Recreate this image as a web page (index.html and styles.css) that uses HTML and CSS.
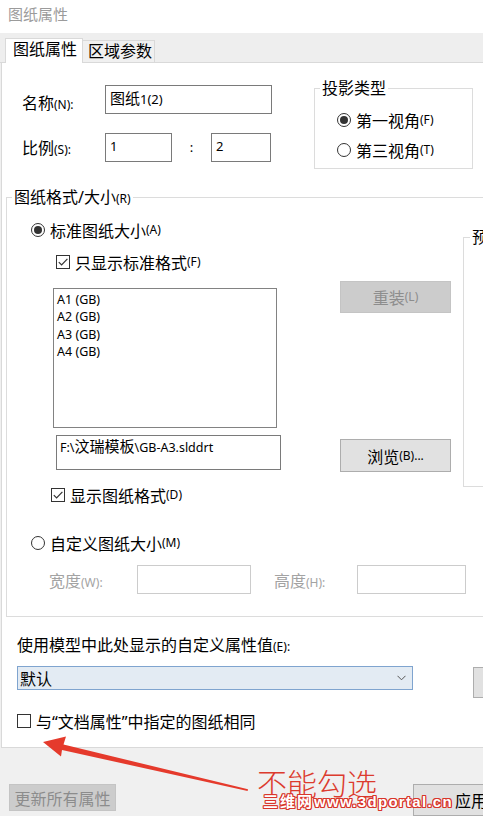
FILE: index.html
```html
<!DOCTYPE html>
<html lang="zh-CN">
<head>
<meta charset="utf-8">
<title>图纸属性</title>
<link rel="stylesheet" href="styles.css">
</head>
<body>
<div class="title">图纸属性</div>
<div class="tabs">
  <div class="tab active">图纸属性</div>
  <div class="tab">区域参数</div>
</div>
<div class="panel">
  <div class="top">
    <div class="fields">
      <div class="frow">
        <span class="lbl l-name">名称<span class="k">(N):</span></span>
        <div class="box name">图纸<span class="lat">1(2)</span></div>
      </div>
      <div class="frow">
        <span class="lbl l-scale">比例<span class="k">(S):</span></span>
        <div class="box sc">1</div>
        <span class="colon">:</span>
        <div class="box sc2">2</div>
      </div>
    </div>
    <fieldset class="proj">
      <legend>投影类型</legend>
      <div class="opt o1"><span class="radio on"></span>第一视角<span class="k">(F)</span></div>
      <div class="opt o2"><span class="radio"></span>第三视角<span class="k">(T)</span></div>
    </fieldset>
  </div>
  <fieldset class="fmt">
    <legend>图纸格式/大小<span class="k">(R)</span></legend>
    <div class="fmt-top">
      <div class="fmt-left">
        <div class="row r1"><span class="radio on"></span>标准图纸大小<span class="k">(A)</span></div>
        <div class="row r2"><span class="check"><svg viewBox="0 0 12 12" width="12" height="12"><path d="M1.8 6.2 L4.6 9 L10.4 2.8" fill="none" stroke="#333" stroke-width="1.2"/></svg></span>只显示标准格式<span class="k">(F)</span></div>
        <div class="r3">
          <div class="list">
            <div>A1 (GB)</div>
            <div>A2 (GB)</div>
            <div>A3 (GB)</div>
            <div>A4 (GB)</div>
          </div>
          <div class="btn reload">重装<span class="k">(L)</span></div>
        </div>
        <div class="r4">
          <div class="path">F:\<span class="cj">汶瑞模板</span>\GB-A3.slddrt</div>
          <div class="btn browse">浏览<span class="k">(B)...</span></div>
        </div>
        <div class="row r5"><span class="check"><svg viewBox="0 0 12 12" width="12" height="12"><path d="M1.8 6.2 L4.6 9 L10.4 2.8" fill="none" stroke="#333" stroke-width="1.2"/></svg></span>显示图纸格式<span class="k">(D)</span></div>
      </div>
      <fieldset class="preview"><legend>预览</legend></fieldset>
    </div>
    <div class="row r6"><span class="radio"></span>自定义图纸大小<span class="k">(M)</span></div>
    <div class="r7">
      <span class="l1">宽度<span class="k">(W):</span></span>
      <div class="dis w"></div>
      <span class="l2">高度<span class="k">(H):</span></span>
      <div class="dis h"></div>
    </div>
  </fieldset>
  <div class="uselbl">使用模型中此处显示的自定义属性值<span class="k">(E):</span></div>
  <div class="selrow">
    <div class="select"><span>默认</span><svg width="9" height="6" viewBox="0 0 9 6"><path d="M0.5 0.8 L4.5 4.8 L8.5 0.8" fill="none" stroke="#555" stroke-width="1"/></svg></div>
    <div class="side"></div>
  </div>
  <div class="row last"><span class="check"></span>与“文档属性”中指定的图纸相同</div>
</div>
<div class="footer">
  <div class="btn upd">更新所有属性</div>
  <div class="btn apply">应用</div>
</div>
<svg class="arrow" width="483" height="816" viewBox="0 0 483 816">
  <polygon points="43,742 66,736.5 63.5,744.5 248,789.3 247.6,791 62,750 61,756.5" fill="#e53a2c"/>
</svg>
<div class="note">不能勾选</div>
<div class="wm"><span class="wcj">三维网</span>www.3dportal.cn</div>
</body>
</html>
```
FILE: styles.css
```css
* { box-sizing: border-box; }
html, body { margin: 0; padding: 0; }
body {
  width: 483px;
  height: 816px;
  overflow: hidden;
  position: relative;
  background: #f0f0f0;
  font-family: "Noto Sans", "Noto Sans CJK SC", sans-serif;
  font-size: 16px;
  color: #000;
}
.k { font-size: 12px; line-height: 0; }

.title {
  height: 33px;
  background: #fff;
  padding-left: 8px;
  line-height: 29px;
  font-size: 15px;
  color: #9b9b9b;
}
.tabs {
  height: 30px;
  background: #eeeeee;
  border-bottom: 1px solid #d9d9d9;
  display: flex;
  align-items: flex-end;
  padding-left: 5px;
}
.tab {
  height: 22px;
  width: 72px;
  line-height: 21px;
  padding-left: 5px;
  background: #f0f0f0;
  border: 1px solid #d9d9d9;
  border-left: none;
  border-bottom: none;
}
.tab.active {
  height: 25px;
  width: 78px;
  margin-bottom: -1px;
  padding-left: 7px;
  padding-bottom: 3px;
  background: #fff;
  border-left: 1px solid #d9d9d9;
  border-right: 1px solid #d9d9d9;
}

.panel {
  margin-left: 1px;
  width: 560px;
  height: 685px;
  background: #fff;
  border-left: 1px solid #d9d9d9;
  border-bottom: 1px solid #d9d9d9;
}
.top { display: flex; height: 126px; }
.fields { width: 312px; padding-top: 22px; flex: none; }
.frow { display: flex; align-items: flex-start; height: 29px; }
.frow + .frow { margin-top: 19px; }
.lbl { margin-left: 20px; width: 83px; line-height: 20px; }
.l-name { margin-top: 8px; }
.l-scale { margin-top: 5px; }
.box {
  height: 29px;
  border: 1px solid #7a7a7a;
  background: #fff;
  padding-left: 4px;
  line-height: 24px;
  font-size: 13px;
}
.box.name { width: 167px; font-size: 15px; }
.lat { font-size: 13px; }
.box.sc { width: 67px; }
.box.sc2 { width: 60px; }
.colon { width: 39px; text-align: center; font-size: 13px; line-height: 29px; }

fieldset { margin: 0; min-width: 0; border: 1px solid #dcdcdc; }
legend { padding: 0 2px; line-height: 16px; }

.proj {
  margin-top: 17px;
  width: 159px;
  height: 89px;
  padding: 0 0 0 5px;
  flex: none;
}
.opt { display: flex; align-items: center; height: 20px; margin-left: 17px; }
.o1 { margin-top: 14px; }
.o2 { margin-top: 10px; }

.radio {
  width: 14px;
  height: 14px;
  border: 1px solid #333;
  border-radius: 50%;
  margin-right: 5px;
  flex: none;
  display: flex;
  align-items: center;
  justify-content: center;
}
.radio.on::after {
  content: "";
  width: 8px;
  height: 8px;
  border-radius: 50%;
  background: #333;
}
.check {
  width: 14px;
  height: 14px;
  border: 1px solid #333;
  margin-right: 5px;
  flex: none;
  display: flex;
  align-items: center;
  justify-content: center;
  background: #fff;
}

.fmt {
  margin-left: 4px;
  width: 560px;
  padding: 0 0 22px 5px;
}
.fmt-top { display: flex; align-items: flex-start; }
.fmt-left { width: 451px; padding-top: 15px; flex: none; }
.row { display: flex; align-items: center; height: 20px; }
.r1 .radio { margin-left: 19px; }
.r2 { margin-top: 12px; }
.r2 .check { margin-left: 44px; }
.r3 { display: flex; align-items: flex-start; margin-top: 9px; }
.list {
  margin: 7px 0 0 41px;
  width: 224px;
  height: 140px;
  border: 1px solid #828282;
  padding: 2px 0 0 3px;
  font-size: 12.5px;
  line-height: 17.3px;
  flex: none;
}
.btn { display: flex; align-items: center; justify-content: center; flex: none; }
.reload {
  margin-left: 63px;
  width: 111px;
  height: 32px;
  background: #cccccc;
  border: 1px solid #c4c4c4;
  color: #8d8d8d;
}
.r4 { display: flex; align-items: flex-start; margin-top: 7px; }
.path {
  margin-left: 44px;
  width: 225px;
  height: 35px;
  border: 1px solid #7a7a7a;
  padding: 0 3px;
  line-height: 24px;
  font-size: 12.5px;
  flex: none;
}
.cj { font-size: 15px; line-height: 0; }
.browse {
  margin: 4px 0 0 59px;
  width: 111px;
  height: 33px;
  background: #e1e1e1;
  border: 1px solid #adadad;
}
.r5 { margin-top: 13px; }
.r5 .check { margin-left: 39px; }
.preview {
  margin-top: 24px;
  width: 120px;
  height: 258px;
  padding: 0 0 0 6px;
  flex: none;
}
.r6 { margin-top: 28px; }
.r6 .radio { margin-left: 19px; }
.r7 {
  display: flex;
  align-items: center;
  margin-top: 12px;
  height: 29px;
  color: #a3a3a3;
}
.r7 .l1 { margin-left: 37px; width: 88px; }
.r7 .l2 { margin-left: 23px; width: 83px; }
.dis { height: 29px; border: 1px solid #cccccc; flex: none; }
.dis.w { width: 114px; }
.dis.h { width: 109px; }

.uselbl { margin: 18px 0 0 15px; line-height: 20px; }
.selrow { display: flex; align-items: flex-start; margin-top: 11px; }
.select {
  margin-left: 15px;
  width: 396px;
  height: 24px;
  background: #e3ebf3;
  border: 1px solid #7fa4cf;
  display: flex;
  align-items: center;
  justify-content: space-between;
  padding: 0 6px 0 2px;
  flex: none;
}
.side {
  margin: 1px 0 0 60px;
  width: 40px;
  height: 31px;
  background: #e1e1e1;
  border: 1px solid #adadad;
  flex: none;
}
.last { margin-top: 13px; }
.last .check { margin-left: 15px; }

.footer { display: flex; align-items: flex-start; padding-top: 36px; }
.upd {
  margin-left: 9px;
  width: 107px;
  height: 27px;
  background: #cccccc;
  border: 1px solid #c4c4c4;
  color: #8c8c8c;
}
.apply {
  margin-left: 297px;
  width: 116px;
  height: 32px;
  background: #e1e1e1;
  border: 1px solid #adadad;
}

.arrow { position: absolute; left: 0; top: 0; pointer-events: none; }
.note {
  position: absolute;
  left: 257px;
  top: 764px;
  font-size: 30px;
  line-height: 36px;
  font-weight: 300;
  color: #dc3b2e;
  font-family: "Noto Sans CJK SC", sans-serif;
}
.wm {
  position: absolute;
  left: 263px;
  top: 792px;
  font-family: "Liberation Sans", "Noto Sans CJK SC", sans-serif;
  font-weight: bold;
  font-size: 15px;
  line-height: 18px;
  letter-spacing: 1.3px;
  color: #fff;
  text-shadow: -1px -1px 0 #d8352a, 1px -1px 0 #d8352a, -1px 1px 0 #d8352a, 1px 1px 0 #d8352a, 0 1px 0 #d8352a, 0 -1px 0 #d8352a, 1px 0 0 #d8352a, -1px 0 0 #d8352a;
}
.wcj { letter-spacing: 2px; font-family: "Noto Sans CJK SC", sans-serif; }
```
